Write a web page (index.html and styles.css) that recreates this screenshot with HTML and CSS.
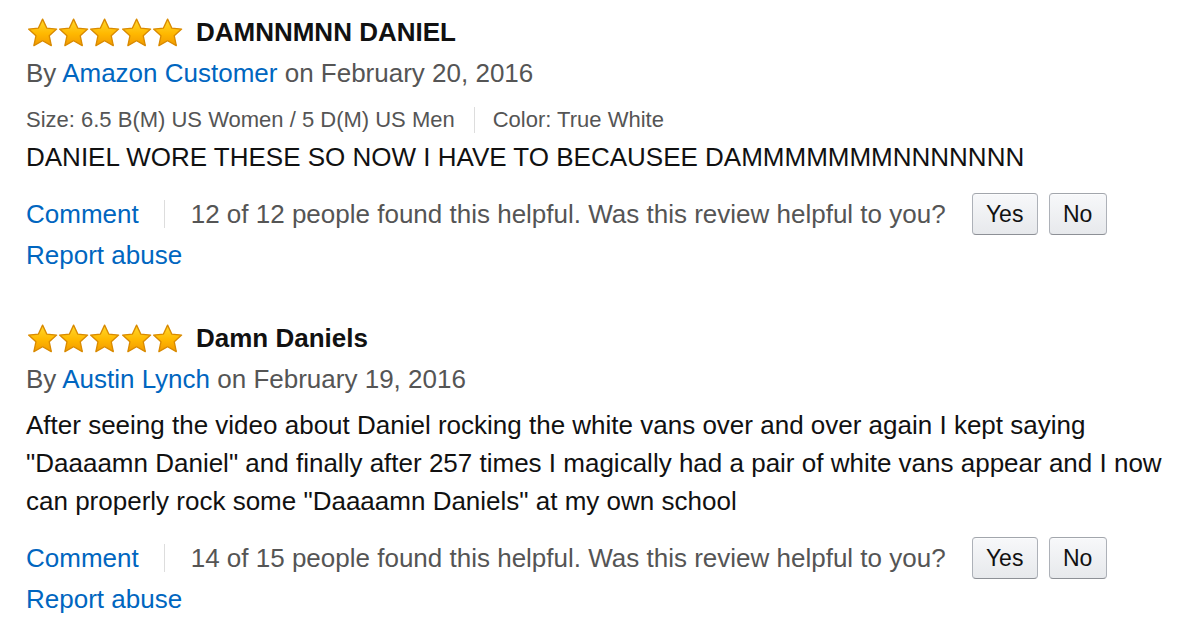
FILE: index.html
```html
<!DOCTYPE html>
<html>
<head>
<meta charset="utf-8">
<link rel="stylesheet" href="styles.css">
</head>
<body>
<svg width="0" height="0" class="defs">
  <defs>
    <linearGradient id="sg" x1="0" y1="0" x2="0" y2="1">
      <stop offset="0" stop-color="#ffd92e"/>
      <stop offset="0.55" stop-color="#ffb800"/>
      <stop offset="1" stop-color="#f29a00"/>
    </linearGradient>
    <symbol id="star" viewBox="0 0 32 30">
      <path d="M16 1.2 L20.3 10.4 L30.5 11.5 L22.9 18.4 L25 28.6 L16 23.5 L7 28.6 L9.1 18.4 L1.5 11.5 L11.7 10.4 Z" fill="url(#sg)" stroke="#d98a00" stroke-width="1.4" stroke-linejoin="round"/>
    </symbol>
  </defs>
</svg>
<div class="reviews">
  <div class="review">
    <div class="title-row">
      <span class="stars">
        <svg class="star"><use href="#star"/></svg><svg class="star"><use href="#star"/></svg><svg class="star"><use href="#star"/></svg><svg class="star"><use href="#star"/></svg><svg class="star"><use href="#star"/></svg>
      </span>
      <span class="title">DAMNNMNN DANIEL</span>
    </div>
    <div class="byline">By <a class="link">Amazon Customer</a> on February 20, 2016</div>
    <div class="variant"><span>Size: 6.5 B(M) US Women / 5 D(M) US Men</span><span class="vsep"></span><span>Color: True White</span></div>
    <div class="body tight">DANIEL WORE THESE SO NOW I HAVE TO BECAUSEE DAMMMMMMMNNNNNNN</div>
    <div class="actions">
      <a class="link">Comment</a><span class="sep"></span><span class="helpful">12 of 12 people found this helpful. Was this review helpful to you?</span>
      <button class="btn yes">Yes</button><button class="btn no">No</button>
    </div>
    <div class="report"><a class="link">Report abuse</a></div>
  </div>
  <div class="review second">
    <div class="title-row">
      <span class="stars">
        <svg class="star"><use href="#star"/></svg><svg class="star"><use href="#star"/></svg><svg class="star"><use href="#star"/></svg><svg class="star"><use href="#star"/></svg><svg class="star"><use href="#star"/></svg>
      </span>
      <span class="title">Damn Daniels</span>
    </div>
    <div class="byline">By <a class="link">Austin Lynch</a> on February 19, 2016</div>
    <div class="body">After seeing the video about Daniel rocking the white vans over and over again I kept saying "Daaaamn Daniel" and finally after 257 times I magically had a pair of white vans appear and I now can properly rock some "Daaaamn Daniels" at my own school</div>
    <div class="actions">
      <a class="link">Comment</a><span class="sep"></span><span class="helpful">14 of 15 people found this helpful. Was this review helpful to you?</span>
      <button class="btn yes">Yes</button><button class="btn no">No</button>
    </div>
    <div class="report"><a class="link">Report abuse</a></div>
  </div>
</div>
</body>
</html>
```

FILE: styles.css
```css
html, body {
  margin: 0;
  padding: 0;
  background: #fff;
}
body {
  font-family: "Liberation Sans", Arial, sans-serif;
  color: #111;
  font-size: 26px;
}
.defs {
  position: absolute;
  width: 0;
  height: 0;
}
.reviews {
  padding: 12px 0 0 26px;
  width: 1140px;
}
.review.second {
  margin-top: 44px;
}
.title-row {
  height: 40px;
  display: flex;
  align-items: center;
}
.stars {
  display: flex;
  align-items: center;
  margin-left: 1px;
  margin-right: 13px;
}
.star {
  width: 31.2px;
  height: 29px;
  display: block;
}
.title {
  font-weight: bold;
  font-size: 26px;
  color: #111;
}
.byline {
  line-height: 42px;
  height: 42px;
  color: #555;
}
.link {
  color: #0066c0;
  text-decoration: none;
}
.variant {
  margin-top: 10px;
  height: 32px;
  display: flex;
  align-items: center;
  font-size: 22px;
  color: #555;
}
.vsep {
  width: 1px;
  height: 26px;
  background: #ddd;
  margin: 0 18px 0 19px;
}
.body {
  line-height: 38px;
  margin-top: 6px;
  color: #111;
}
.body.tight {
  margin-top: 2px;
}
.actions {
  margin-top: 17px;
  height: 42px;
  display: flex;
  align-items: center;
}
.sep {
  width: 1px;
  height: 28px;
  background: #ddd;
  margin: 0 26px 0 25px;
}
.helpful {
  color: #555;
}
.btn {
  font-family: "Liberation Sans", Arial, sans-serif;
  font-size: 23px;
  color: #111;
  height: 42px;
  border: 1px solid #adb1b8;
  border-top-color: #a2a6ac;
  border-bottom-color: #8d9096;
  border-radius: 4px;
  background: linear-gradient(#f7f8fa, #e7e9ec);
  box-shadow: inset 0 1px 0 rgba(255,255,255,0.6);
  padding: 0;
  margin: 0;
}
.btn.yes {
  width: 66px;
  margin-left: 26px;
}
.btn.no {
  width: 58px;
  margin-left: 11px;
}
.report {
  margin-top: 1px;
  line-height: 38px;
}
```
